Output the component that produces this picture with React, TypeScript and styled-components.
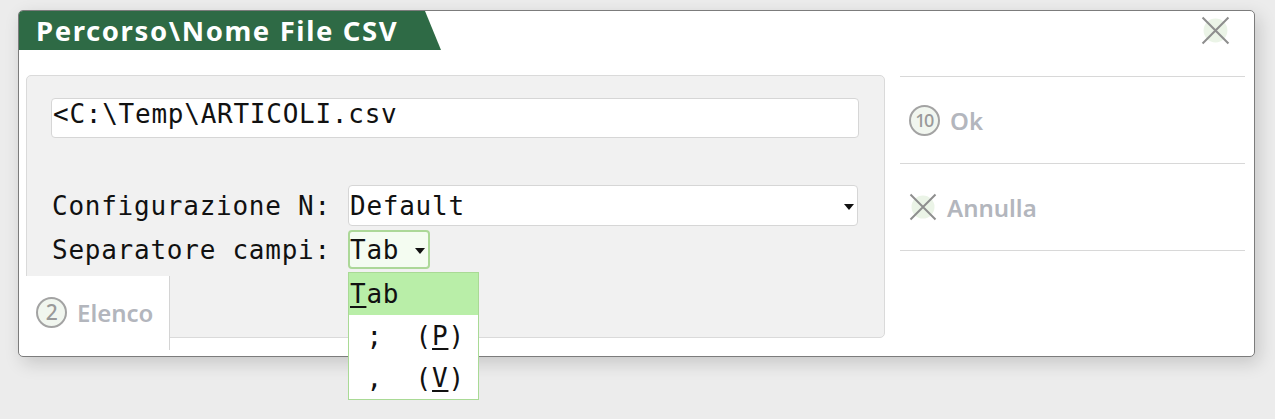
import React from "react";
import styled, { createGlobalStyle } from "styled-components";

const GlobalStyle = createGlobalStyle`
  html, body { margin: 0; padding: 0; background: #ececec; }
  body { font-family: "Noto Sans", sans-serif; }
  * { box-sizing: border-box; }
`;

const Page = styled.div`
  padding: 10px 0 0 18px;
  height: 419px;
`;

const Window = styled.div`
  position: relative;
  width: 1237px;
  height: 347px;
  background: #fff;
  border: 1px solid #7c7c7c;
  border-radius: 5px;
  box-shadow: 4px 6px 18px rgba(0, 0, 0, 0.16);
  display: flex;
  flex-direction: column;
`;

const Header = styled.div`
  display: flex;
  justify-content: space-between;
  align-items: flex-start;
  height: 39px;
`;

const TitleTab = styled.div`
  width: 422px;
  height: 39px;
  padding: 0 0 1px 17px;
  display: flex;
  align-items: center;
  background: #2e6a45;
  color: #fff;
  border-top-left-radius: 4px;
  clip-path: polygon(0 0, calc(100% - 16px) 0, 100% 100%, 0 100%);
  font: 700 27.5px "Noto Sans", sans-serif;
  letter-spacing: 1.6px;
  white-space: nowrap;
`;

const CloseButton = styled.div`
  margin: 5px 24px 0 0;
  width: 29px;
  height: 29px;
  display: flex;
`;

const Body = styled.div`
  display: flex;
  gap: 15px;
  padding: 25px 8px 0 7px;
`;

const LeftArea = styled.div`
  position: relative;
  width: 859px;
`;

const Panel = styled.div`
  height: 263px;
  background: #f1f1f1;
  border: 1px solid #dadada;
  border-radius: 5px;
  padding: 22px 25px 0 24px;
`;

const mono = `"DejaVu Sans Mono", "Liberation Mono", monospace`;
const monoText = `
  font: 400 26px ${mono};
  letter-spacing: 0.75px;
  color: #111;
  white-space: pre;
`;

const PathInput = styled.div`
  height: 40px;
  background: #fff;
  border: 1px solid #d6d6d6;
  border-radius: 4px;
  padding-left: 1px;
  line-height: 38px;
  ${monoText}
`;

const Form = styled.div`
  margin-top: 47px;
  display: flex;
  flex-direction: column;
  gap: 4px;
`;

const Row = styled.div`
  display: grid;
  grid-template-columns: 297px auto;
  align-items: center;
`;

const Label = styled.div`
  padding-left: 1px;
  ${monoText}
`;

const Combo = styled.div<{ $w: number; $h: number; $active?: boolean }>`
  position: relative;
  width: ${(p) => p.$w}px;
  height: ${(p) => p.$h}px;
  background: ${(p) => (p.$active ? "#f4fcf1" : "#fff")};
  border: ${(p) => (p.$active ? "2px solid #acd898" : "1px solid #d6d6d6")};
  border-radius: 4px;
  display: flex;
  align-items: center;
  justify-content: space-between;
  padding: 0 3px 0 ${(p) => (p.$active ? 0 : 1)}px;
  ${monoText}
`;

const Caret = styled.span`
  width: 0;
  height: 0;
  border-left: 5px solid transparent;
  border-right: 5px solid transparent;
  border-top: 6px solid #111;
  margin-top: 2px;
`;

const DropList = styled.div`
  position: absolute;
  top: calc(100% + 5px);
  left: -2px;
  width: 131px;
  background: #fff;
  border: 1px solid #a9da95;
  z-index: 5;
`;

const DropItem = styled.div<{ $selected?: boolean }>`
  height: 42px;
  display: flex;
  align-items: center;
  padding-left: 1px;
  background: ${(p) => (p.$selected ? "#b9eea8" : "#fff")};
  ${monoText}
  u {
    text-decoration: underline;
    text-decoration-thickness: 2px;
    text-underline-offset: 3px;
  }
`;

const ElencoTab = styled.div`
  position: absolute;
  left: -7px;
  top: 201px;
  width: 151px;
  height: 74px;
  background: #fff;
  border-right: 1px solid #d4d4d4;
  display: flex;
  align-items: center;
  padding: 0 0 2px 17px;
  gap: 10px;
`;

const Circled = styled.span<{ $size: number; $fs: number }>`
  width: ${(p) => p.$size}px;
  height: ${(p) => p.$size}px;
  border-radius: 50%;
  border: 2px solid #a3a3a3;
  background: #f1f6ef;
  color: #999;
  display: inline-flex;
  align-items: center;
  justify-content: center;
  font: 500 ${(p) => p.$fs}px "Noto Sans", sans-serif;
  letter-spacing: -1.5px;
  text-indent: -1px;
  flex: none;
`;

const MutedText = styled.span`
  font: 600 24px "Noto Sans", sans-serif;
  color: #b3b6bd;
`;

const SideColumn = styled.div`
  width: 345px;
  margin-top: 1px;
  border-top: 1px solid #d8d8d8;
  display: flex;
  flex-direction: column;
`;

const SideButton = styled.div`
  height: 87px;
  border-bottom: 1px solid #d8d8d8;
  display: flex;
  align-items: center;
  gap: 10px;
  padding-left: 9px;
`;

const XIcon = ({ size }: { size: number }) => (
  <svg width={size} height={size} viewBox="0 0 28 28">
    <circle cx="14" cy="14" r="11.5" fill="#ebf4e7" />
    <path d="M1.5 1.5 L26.5 26.5 M26.5 1.5 L1.5 26.5" stroke="#8e8e8e" strokeWidth="2" fill="none" />
  </svg>
);

export default function App() {
  return (
    <>
      <GlobalStyle />
      <Page>
        <Window>
          <Header>
            <TitleTab>Percorso\Nome File CSV</TitleTab>
            <CloseButton>
              <XIcon size={29} />
            </CloseButton>
          </Header>
          <Body>
            <LeftArea>
              <Panel>
                <PathInput>{"<C:\\Temp\\ARTICOLI.csv"}</PathInput>
                <Form>
                  <Row>
                    <Label>Configurazione N:</Label>
                    <Combo $w={510} $h={41}>
                      <span>Default</span>
                      <Caret />
                    </Combo>
                  </Row>
                  <Row>
                    <Label>Separatore campi:</Label>
                    <Combo $w={82} $h={39} $active>
                      <span>Tab</span>
                      <Caret />
                      <DropList>
                        <DropItem $selected>
                          <u>T</u>ab
                        </DropItem>
                        <DropItem>
                          {" ;  ("}
                          <u>P</u>)
                        </DropItem>
                        <DropItem>
                          {" ,  ("}
                          <u>V</u>)
                        </DropItem>
                      </DropList>
                    </Combo>
                  </Row>
                </Form>
              </Panel>
              <ElencoTab>
                <Circled $size={31} $fs={21}>2</Circled>
                <MutedText>Elenco</MutedText>
              </ElencoTab>
            </LeftArea>
            <SideColumn>
              <SideButton>
                <Circled $size={31} $fs={18}>10</Circled>
                <MutedText>Ok</MutedText>
              </SideButton>
              <SideButton>
                <XIcon size={28} />
                <MutedText>Annulla</MutedText>
              </SideButton>
            </SideColumn>
          </Body>
        </Window>
      </Page>
    </>
  );
}
